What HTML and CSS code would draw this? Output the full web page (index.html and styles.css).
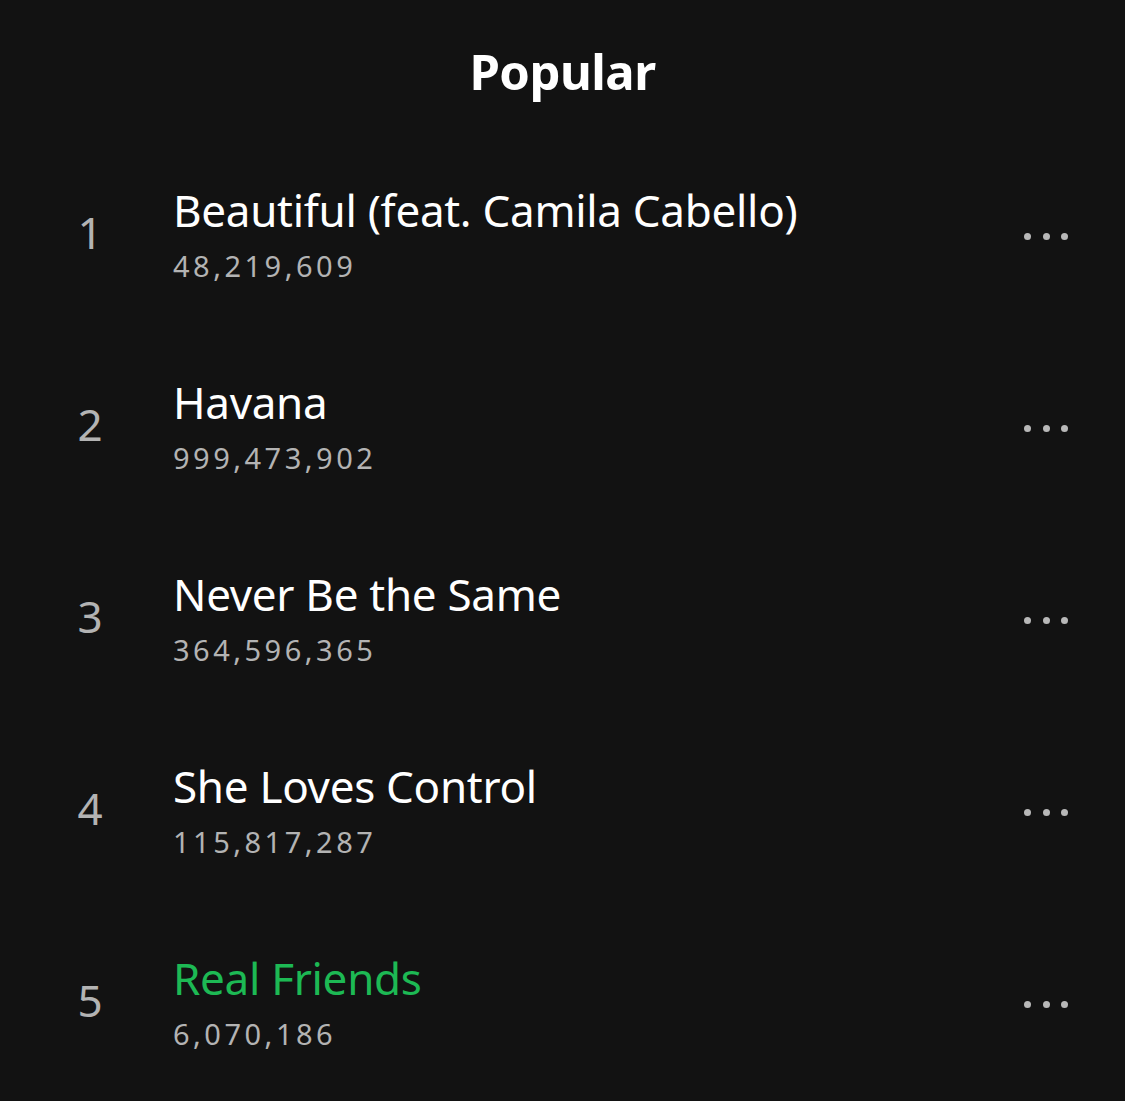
FILE: index.html
```html
<!DOCTYPE html>
<html>
<head>
<meta charset="utf-8">
<link rel="stylesheet" href="styles.css">
</head>
<body>
<div class="page">
  <h1 class="heading">Popular</h1>
  <ol class="tracks">
    <li class="track">
      <span class="num">1</span>
      <div class="info">
        <div class="title">Beautiful (feat. Camila Cabello)</div>
        <div class="plays">48,219,609</div>
      </div>
      <span class="more"><i></i><i></i><i></i></span>
    </li>
    <li class="track">
      <span class="num">2</span>
      <div class="info">
        <div class="title">Havana</div>
        <div class="plays">999,473,902</div>
      </div>
      <span class="more"><i></i><i></i><i></i></span>
    </li>
    <li class="track">
      <span class="num">3</span>
      <div class="info">
        <div class="title">Never Be the Same</div>
        <div class="plays">364,596,365</div>
      </div>
      <span class="more"><i></i><i></i><i></i></span>
    </li>
    <li class="track">
      <span class="num">4</span>
      <div class="info">
        <div class="title">She Loves Control</div>
        <div class="plays">115,817,287</div>
      </div>
      <span class="more"><i></i><i></i><i></i></span>
    </li>
    <li class="track">
      <span class="num">5</span>
      <div class="info">
        <div class="title active">Real Friends</div>
        <div class="plays">6,070,186</div>
      </div>
      <span class="more"><i></i><i></i><i></i></span>
    </li>
  </ol>
</div>
</body>
</html>
```
FILE: styles.css
```css
html, body {
  margin: 0;
  padding: 0;
  background: #121212;
}
body {
  font-family: "Noto Sans", "Lato", sans-serif;
  color: #ffffff;
}
.page {
  width: 1125px;
  height: 1101px;
  overflow: hidden;
}
.heading {
  margin: 0;
  height: 140px;
  display: flex;
  align-items: center;
  justify-content: center;
  font-size: 49px;
  font-weight: 700;
  letter-spacing: -0.5px;
  padding-top: 2px;
  box-sizing: border-box;
}
.tracks {
  list-style: none;
  margin: 0;
  padding: 0;
}
.track {
  height: 192px;
  display: flex;
  align-items: center;
  padding: 0 57px 0 40px;
}
.num {
  width: 100px;
  text-align: center;
  font-size: 44px;
  color: #b3b3b3;
  flex: none;
  margin-right: 33px;
  margin-bottom: 8px;
}
.info {
  flex: 1;
  display: flex;
  flex-direction: column;
  margin-bottom: 2px;
}
.title {
  font-size: 44px;
  line-height: 48px;
  letter-spacing: -0.3px;
  color: #ffffff;
}
.title.active {
  color: #1db954;
}
.plays {
  font-size: 29px;
  line-height: 36px;
  letter-spacing: 3.5px;
  color: #b3b3b3;
  margin-top: 14px;
}
.more {
  display: flex;
  gap: 11.5px;
}
.more i {
  width: 7px;
  height: 7px;
  border-radius: 50%;
  background: #b8b8b8;
}
```
